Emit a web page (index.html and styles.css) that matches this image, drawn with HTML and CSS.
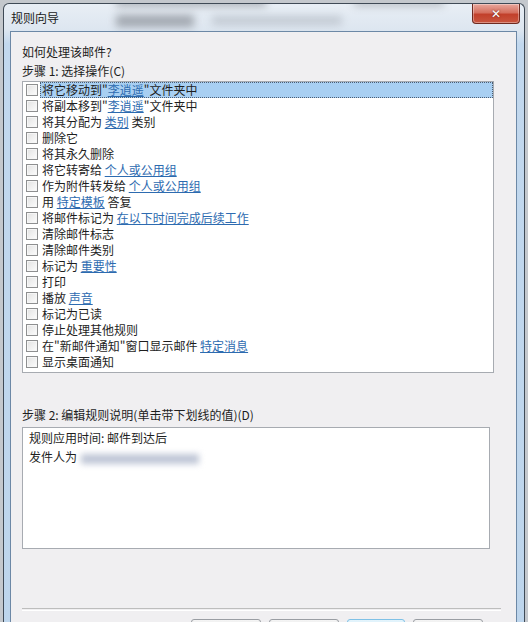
FILE: index.html
```html
<!DOCTYPE html>
<html lang="zh-CN">
<head>
    <meta charset="UTF-8">
    <meta name="viewport" content="width=device-width, initial-scale=1.0">
    <title>规则向导</title>
    <link rel="stylesheet" href="styles.css">
</head>
<body>

<div class="fenster">
    <div class="glas">
        <span class="fleck fleck-1"></span>
        <span class="fleck fleck-2"></span>
        <span class="fleck fleck-3"></span>
        <span class="fleck fleck-4"></span>
    </div>

    <div class="titelleiste">
        <span class="titel">规则向导</span>
        <button class="schliessen" type="button">✕</button>
    </div>

    <div class="inhalt">
        <p class="zeile">如何处理该邮件?</p>
        <p class="zeile">步骤 1: 选择操作(C)</p>

        <div class="liste">
            <div class="eintrag aktiv"><span class="kasten"></span><span class="text">将它移动到"<a href="#">李逍遥</a>"文件夹中</span></div>
            <div class="eintrag"><span class="kasten"></span><span class="text">将副本移到"<a href="#">李逍遥</a>"文件夹中</span></div>
            <div class="eintrag"><span class="kasten"></span><span class="text">将其分配为 <a href="#">类别</a> 类别</span></div>
            <div class="eintrag"><span class="kasten"></span><span class="text">删除它</span></div>
            <div class="eintrag"><span class="kasten"></span><span class="text">将其永久删除</span></div>
            <div class="eintrag"><span class="kasten"></span><span class="text">将它转寄给 <a href="#">个人或公用组</a></span></div>
            <div class="eintrag"><span class="kasten"></span><span class="text">作为附件转发给 <a href="#">个人或公用组</a></span></div>
            <div class="eintrag"><span class="kasten"></span><span class="text">用 <a href="#">特定模板</a> 答复</span></div>
            <div class="eintrag"><span class="kasten"></span><span class="text">将邮件标记为 <a href="#">在以下时间完成后续工作</a></span></div>
            <div class="eintrag"><span class="kasten"></span><span class="text">清除邮件标志</span></div>
            <div class="eintrag"><span class="kasten"></span><span class="text">清除邮件类别</span></div>
            <div class="eintrag"><span class="kasten"></span><span class="text">标记为 <a href="#">重要性</a></span></div>
            <div class="eintrag"><span class="kasten"></span><span class="text">打印</span></div>
            <div class="eintrag"><span class="kasten"></span><span class="text">播放 <a href="#">声音</a></span></div>
            <div class="eintrag"><span class="kasten"></span><span class="text">标记为已读</span></div>
            <div class="eintrag"><span class="kasten"></span><span class="text">停止处理其他规则</span></div>
            <div class="eintrag"><span class="kasten"></span><span class="text">在"新邮件通知"窗口显示邮件 <a href="#">特定消息</a></span></div>
            <div class="eintrag"><span class="kasten"></span><span class="text">显示桌面通知</span></div>
        </div>

        <p class="zeile schritt2">步骤 2: 编辑规则说明(单击带下划线的值)(D)</p>

        <div class="beschreibung">
            <p class="zeile">规则应用时间: 邮件到达后</p>
            <p class="zeile">发件人为 <span class="verdeckt"></span></p>
        </div>

        <div class="trennlinie"></div>

        <!-- Knöpfe liegen fast ganz unterhalb des sichtbaren Bereichs -->
        <div class="knoepfe">
            <button class="knopf" type="button"></button>
            <button class="knopf" type="button"></button>
            <button class="knopf standard" type="button"></button>
            <button class="knopf" type="button"></button>
        </div>
    </div>
</div>

</body>
</html>
```

FILE: styles.css
```css
body {
    margin: 0;
    background: #c4c8cd;
    font-family: "Noto Sans CJK SC", "Noto Sans", sans-serif;
    font-size: 12px;
    color: #1e1e1e;
    overflow: hidden;
}
.fenster {
    position: relative;
    margin: 3px 3px 0 3px;
    padding: 0 7px 0 6px;
    border: 1px solid #3f4a56;
    border-bottom: none;
    border-radius: 6px 6px 0 0;
    background: linear-gradient(180deg, #e8eef5 0, #dde6f0 26px, #c2d8ee 40px, #bdd5ec 100%);
    height: 640px;
}
/* verschwommener Hintergrund hinter dem Glasrahmen */
.glas {
    position: absolute;
    left: 0;
    top: 0;
    right: 0;
    height: 28px;
    overflow: hidden;
}
.fleck {
    position: absolute;
    background: #6d7178;
    filter: blur(4px);
    opacity: 0.55;
}
.fleck-1 { left: 112px; top: 11px; width: 78px; height: 12px; }
.fleck-2 { left: 208px; top: 12px; width: 130px; height: 9px; background: #9aa1aa; opacity: 0.45; }
.fleck-3 { left: 112px; top: -6px; width: 150px; height: 8px; }
.fleck-4 { left: 350px; top: -6px; width: 90px; height: 8px; opacity: 0.4; }

.titelleiste {
    position: relative;
    display: flex;
    justify-content: space-between;
    align-items: flex-start;
    height: 27px;
}
.titel {
    padding-left: 1px;
    line-height: 27px;
    color: #1a1a1a;
}
.schliessen {
    width: 48px;
    height: 20px;
    margin-right: -3px;
    padding: 0;
    border: 1px solid #6e2a20;
    border-top: none;
    border-radius: 0 0 4px 4px;
    background: linear-gradient(180deg, #e9a89d 0, #d5705f 45%, #c2402b 55%, #c9563f 100%);
    color: #fff;
    font-family: "DejaVu Sans", sans-serif;
    font-size: 12px;
    font-weight: bold;
    line-height: 18px;
    text-shadow: 0 0 2px #5a1a12;
    box-shadow: inset 0 0 0 1px rgba(255, 255, 255, 0.35);
}
.inhalt {
    display: flex;
    flex-direction: column;
    padding: 10px 0 0 11px;
    border: 1px solid #6c88a6;
    border-bottom: none;
    background: #f0eff1;
    height: 600px;
}
.zeile {
    margin: 0;
    line-height: 19px;
    white-space: nowrap;
}
.liste {
    margin: 1px 22px 0 0;
    padding: 0 0 2px 0;
    border: 1px solid #a7abb1;
    background: #fff;
}
.eintrag {
    display: flex;
    align-items: center;
    height: 16px;
}
.kasten {
    flex: none;
    width: 10px;
    height: 10px;
    margin-left: 3px;
    border: 1px solid #8e8f90;
    background: linear-gradient(135deg, #e2e2e2, #fdfdfd);
    box-shadow: inset 0 0 0 1px #f6f6f6;
}
.text {
    flex: 1;
    margin-left: 2px;
    padding-left: 1px;
    height: 14px;
    line-height: 14px;
    border: 1px solid transparent;
    white-space: nowrap;
}
.eintrag.aktiv .text {
    background: #a8cff2;
    border: 1px dotted #4c5d72;
}
.text a {
    color: #2d6bb0;
    text-decoration: underline;
}
.schritt2 {
    margin-top: 32px;
}
.beschreibung {
    margin: 3px 26px 0 0;
    padding: 0 6px;
    height: 120px;
    border: 1px solid #a7abb1;
    background: #fff;
}
.verdeckt {
    display: inline-block;
    width: 118px;
    height: 10px;
    margin-left: 1px;
    vertical-align: middle;
    background: #bfc6d6;
    filter: blur(3px);
}
.trennlinie {
    margin: 59px 15px 0 0;
    height: 1px;
    border-top: 1px solid #bdbdbd;
    border-bottom: 1px solid #fff;
}
.knoepfe {
    display: flex;
    justify-content: flex-end;
    gap: 8px;
    margin: 8px 33px 0 0;
}
.knopf {
    width: 70px;
    height: 23px;
    border: 1px solid #9a9ea3;
    border-radius: 3px;
    background: linear-gradient(180deg, #f4f4f4, #dcdcdc);
}
.knopf.standard {
    width: 58px;
    border-color: #7fc1e6;
    background: linear-gradient(180deg, #e3f4fc, #c4e5f6);
}
```
